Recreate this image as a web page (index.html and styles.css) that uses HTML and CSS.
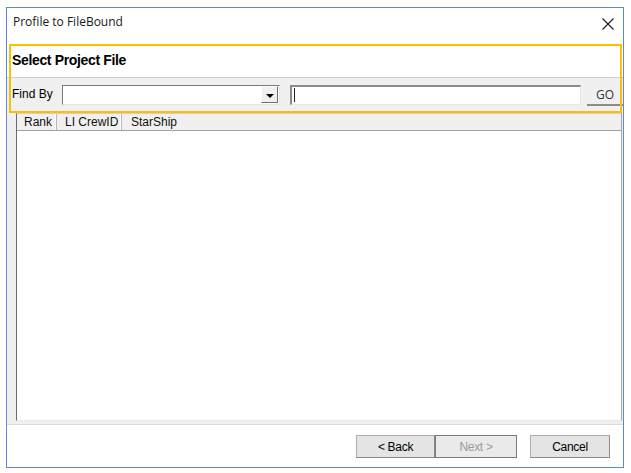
FILE: index.html
```html
<!DOCTYPE html>
<html>
<head>
<meta charset="utf-8">
<link rel="stylesheet" href="styles.css">
</head>
<body>
<div class="window">
  <div class="titlebar">
    <span class="title">Profile to FileBound</span>
    <svg class="close" width="12" height="12" viewBox="0 0 12 12"><path d="M0.5 0.5 L11.5 11.5 M11.5 0.5 L0.5 11.5" stroke="#222" stroke-width="1.2" fill="none"/></svg>
  </div>
  <div class="main">
    <div class="section-head">Select Project File</div>
    <div class="toolbar">
      <span class="label">Find By</span>
      <div class="combo">
        <div class="combo-btn"><span class="tri"></span></div>
      </div>
      <div class="textbox"><span class="caret"></span></div>
      <div class="go">GO</div>
    </div>
    <div class="listwrap">
      <div class="list">
        <div class="header">
          <div class="col c1">Rank</div>
          <div class="col c2">LI CrewID</div>
          <div class="col c3">StarShip</div>
        </div>
      </div>
    </div>
  </div>
  <div class="footer">
    <div class="btn back">&lt; Back</div>
    <div class="btn next">Next &gt;</div>
    <div class="btn cancel">Cancel</div>
  </div>
  <div class="highlight"></div>
</div>
</body>
</html>
```
FILE: styles.css
```css
* { box-sizing: border-box; }
html, body { margin: 0; padding: 0; background: #ffffff; }
body { width: 631px; height: 473px; overflow: hidden; font-family: "Liberation Sans", Arial, sans-serif; }

.window {
  position: relative;
  margin: 7px 0 0 6px;
  width: 618px;
  height: 461px;
  border: 1px solid #5a8ad8;
  background: #ffffff;
  display: flex;
  flex-direction: column;
}

.titlebar {
  height: 36px;
  flex: none;
  display: flex;
  align-items: center;
  justify-content: space-between;
  padding: 0 9px 9px 6px;
}
.title { font-family: "Open Sans", "Noto Sans", sans-serif; font-size: 12px; color: #1a1a1a; }
.close { display: block; margin-top: 4px; }

.main { flex: 1; display: flex; flex-direction: column; background: #f0f0f0; }

.section-head {
  height: 34px;
  flex: none;
  background: #ffffff;
  border-bottom: 1px solid #cfcfcf;
  display: flex;
  align-items: center;
  padding: 0 0 1px 5px;
  font-weight: bold;
  font-size: 14px;
  letter-spacing: -0.35px;
  color: #000;
}

.toolbar {
  height: 33px;
  flex: none;
  display: flex;
  align-items: center;
  padding: 0 0 0 5px;
  font-size: 12px;
  color: #000;
}
.label { width: 50px; flex: none; padding-bottom: 1px; }

.combo {
  width: 218px;
  height: 20px;
  flex: none;
  margin-right: 10px;
  background: #ffffff;
  border-top: 1px solid #7a7a7a;
  border-left: 1px solid #7a7a7a;
  border-right: 1px solid #e6e6e6;
  border-bottom: 1px solid #e6e6e6;
  display: flex;
  justify-content: flex-end;
  align-items: center;
  padding-right: 1px;
}
.combo-btn {
  width: 17px;
  height: 17px;
  background: #f0f0f0;
  border-top: 1px solid #ffffff;
  border-left: 1px solid #ffffff;
  border-right: 1px solid #6e6e6e;
  border-bottom: 1px solid #6e6e6e;
  display: flex;
  align-items: center;
  justify-content: center;
}
.tri {
  width: 0; height: 0;
  border-left: 4px solid transparent;
  border-right: 4px solid transparent;
  border-top: 4px solid #000;
  margin-top: 2px;
}

.textbox {
  width: 291px;
  height: 20px;
  flex: none;
  margin-right: 6px;
  background: #ffffff;
  border-top: 2px solid #8a8a8a;
  border-left: 2px solid #8a8a8a;
  border-right: 1px solid #e8e8e8;
  border-bottom: 1px solid #e8e8e8;
  display: flex;
  align-items: center;
  padding-left: 2px;
}
.caret { width: 1px; height: 14px; background: #222; }

.go {
  width: 36px;
  height: 22px;
  flex: none;
  margin-top: 1px;
  display: flex;
  align-items: center;
  justify-content: center;
  font-family: "Open Sans", "Noto Sans", sans-serif;
  font-size: 12px;
  color: #333;
  background: #f0f0f0;
  border-bottom: 2px solid #8c8c8c;
}

.listwrap {
  flex: 1;
  padding: 2px 1px 3px 9px;
  border-bottom: 1px solid #dcdcdc;
  display: flex;
}
.list {
  flex: 1;
  background: #ffffff;
  border-left: 1px solid #6a6a6a;
  border-top: 1px solid #d0d0d0;
  border-right: 1px solid #a8a8a8;
  border-bottom: 1px solid #e8e8e8;
}
.header {
  height: 17px;
  display: flex;
  background: #f0f0f0;
  border-bottom: 1px solid #a0a0a0;
  font-size: 12px;
  color: #111;
}
.col {
  height: 100%;
  display: flex;
  align-items: center;
  padding-bottom: 1px;
  border-right: 1px solid #b8b8b8;
  box-shadow: inset -1px 0 0 #ffffff;
}
.c1 { width: 40px; padding-left: 7px; }
.c2 { width: 65px; padding-left: 8px; }
.c3 { width: 70px; padding-left: 9px; border-right: none; box-shadow: none; }

.footer {
  height: 42px;
  flex: none;
  background: #ffffff;
  display: flex;
  justify-content: flex-end;
  align-items: flex-start;
  padding: 10px 13px 0 0;
}
.btn {
  height: 23px;
  display: flex;
  align-items: center;
  justify-content: center;
  font-size: 12px;
  letter-spacing: -0.3px;
  color: #000;
  background: #e4e4e4;
  border: 1px solid #adadad;
  border-right-color: #8a8a8a;
  border-bottom-color: #8a8a8a;
}
.back { width: 79px; }
.next { width: 82px; margin-left: 0; color: #9a9a9a; border: 1px solid #7a7a7a; background: #eaeaea; }
.cancel { width: 80px; margin-left: 13px; }

.highlight {
  position: absolute;
  left: 2px;
  top: 36px;
  width: 613px;
  height: 69px;
  border: 2px solid #ffbf00;
  pointer-events: none;
}
```
